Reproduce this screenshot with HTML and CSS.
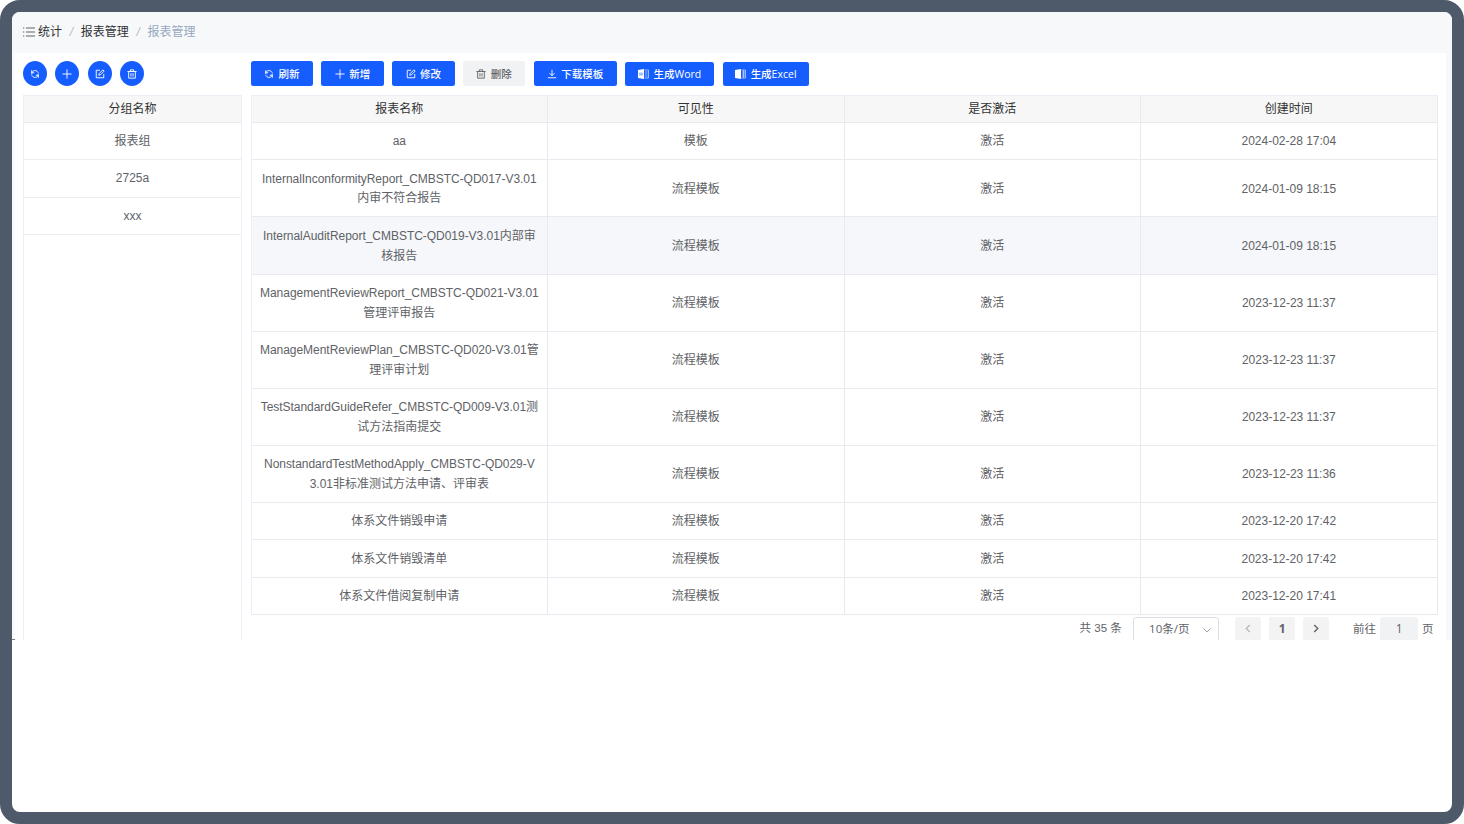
FILE: index.html
```
<!DOCTYPE html>
<html lang="zh-CN">
<head>
<meta charset="utf-8">
<title>报表管理</title>
<link rel="stylesheet" href="styles.css">
</head>
<body>
<svg class="defs" width="0" height="0">
  <symbol id="sync" viewBox="0 0 24 24"><path d="M4 13a8 8 0 0 1 14-6.500l2 2.500M4 3v6h6M20 11a8 8 0 0 1-14 6.500L4 15M20 21v-6h-6"/></symbol>
  <symbol id="plus" viewBox="0 0 24 24"><path d="M12 1v22M1 12h22"/></symbol>
  <symbol id="edit" viewBox="0 0 24 24"><path d="M12 3H3v18h18v-9M9 15l1-4 9-9 3 3-9 9z"/></symbol>
  <symbol id="trash" viewBox="0 0 24 24"><path d="M1 6h22M8 6V2h8v4M4 6v16h16V6M9.500 10v8M14.500 10v8"/></symbol>
  <symbol id="download" viewBox="0 0 24 24"><path d="M12 2v14M6 10l6 6 6-6M2 21h20"/></symbol>
</svg>
<div class="frame">
  <nav class="crumbs">
    <svg class="menu" viewBox="0 0 12 10"><path d="M3 1h9M3 5h9M3 9h9M0 1h1.300M0 5h1.300M0 9h1.300"/></svg>
    <span class="here">统计</span><i>/</i><span class="here">报表管理</span><i>/</i><span>报表管理</span>
  </nav>
  <main class="page">
    <aside class="side">
      <div class="rounds">
        <button><svg><use href="#sync"/></svg></button>
        <button><svg><use href="#plus"/></svg></button>
        <button><svg><use href="#edit"/></svg></button>
        <button><svg><use href="#trash"/></svg></button>
      </div>
      <div class="groups">
        <div class="group-head">分组名称</div>
        <div class="group">报表组</div>
        <div class="group">2725a</div>
        <div class="group">xxx</div>
      </div>
    </aside>
    <section class="main">
      <div class="tools">
        <button class="btn"><svg><use href="#sync"/></svg>刷新</button>
        <button class="btn"><svg><use href="#plus"/></svg>新增</button>
        <button class="btn"><svg><use href="#edit"/></svg>修改</button>
        <button class="btn off"><svg><use href="#trash"/></svg>删除</button>
        <button class="btn load"><svg><use href="#download"/></svg>下载模板</button>
        <button class="btn word"><svg class="doc" viewBox="0 0 11 10"><path class="solid" d="M0 1l6-1v10L0 9z"/><path class="mark" d="M1.200 3.500l.8 3 1-3 1 3 .8-3"/><path class="page-line" d="M6.500 1h4v8h-4M7 3h2.500M7 5h2.500M7 7h2.500"/></svg>生成Word</button>
        <button class="btn excel"><svg class="doc" viewBox="0 0 11 10"><path class="solid" d="M0 1l6-1v10L0 9z"/><path class="page-line" d="M6.500 1h4v8h-4M7 3h3M7 5h3M7 7h3M8.500 1v8"/></svg>生成Excel</button>
      </div>
      <table class="reports">
        <thead><tr><th>报表名称</th><th>可见性</th><th>是否激活</th><th>创建时间</th></tr></thead>
        <tbody>
          <tr><td>aa</td><td>模板</td><td>激活</td><td>2024-02-28 17:04</td></tr>
          <tr class="tall"><td><span class="fit">InternalInconformityReport_CMBSTC-QD017-V3.01</span><br>内审不符合报告</td><td>流程模板</td><td>激活</td><td>2024-01-09 18:15</td></tr>
          <tr class="tall hover"><td><span class="fit">InternalAuditReport_CMBSTC-QD019-V3.01内部审</span><br>核报告</td><td>流程模板</td><td>激活</td><td>2024-01-09 18:15</td></tr>
          <tr class="tall"><td><span class="fit">ManagementReviewReport_CMBSTC-QD021-V3.01</span><br>管理评审报告</td><td>流程模板</td><td>激活</td><td>2023-12-23 11:37</td></tr>
          <tr class="tall"><td><span class="fit">ManageMentReviewPlan_CMBSTC-QD020-V3.01管</span><br>理评审计划</td><td>流程模板</td><td>激活</td><td>2023-12-23 11:37</td></tr>
          <tr class="tall"><td><span class="fit">TestStandardGuideRefer_CMBSTC-QD009-V3.01测</span><br>试方法指南提交</td><td>流程模板</td><td>激活</td><td>2023-12-23 11:37</td></tr>
          <tr class="tall"><td><span class="fit">NonstandardTestMethodApply_CMBSTC-QD029-V</span><br>3.01非标准测试方法申请、评审表</td><td>流程模板</td><td>激活</td><td>2023-12-23 11:36</td></tr>
          <tr><td>体系文件销毁申请</td><td>流程模板</td><td>激活</td><td>2023-12-20 17:42</td></tr>
          <tr><td>体系文件销毁清单</td><td>流程模板</td><td>激活</td><td>2023-12-20 17:42</td></tr>
          <tr><td>体系文件借阅复制申请</td><td>流程模板</td><td>激活</td><td>2023-12-20 17:41</td></tr>
        </tbody>
      </table>
      <div class="pager">
        <span class="total">共 35 条</span>
        <div class="size"><span>10条/页</span><svg viewBox="0 0 8 5"><path d="M.5.5L4 4 7.500.5"/></svg></div>
        <div class="pg prev"><svg viewBox="0 0 6 10"><path d="M5 1L1 5l4 4"/></svg></div>
        <div class="pg">1</div>
        <div class="pg"><svg viewBox="0 0 6 10"><path d="M1 1l4 4-4 4"/></svg></div>
        <span class="go">前往</span><div class="jump">1</div><span class="unit">页</span>
      </div>
    </section>
  </main>
  <span class="tick"></span>
</div>
</body>
</html>
```
FILE: styles.css
```
* { box-sizing: border-box; }
body { margin: 0; background: #fff; font: 12px/19.5px "Liberation Sans", "Noto Sans CJK SC", sans-serif; color: #606266; }
.defs { position: absolute; }
svg { fill: none; stroke: currentColor; display: block; flex: none; }
.frame { position: relative; width: 1464px; height: 824px; border: 12px solid #4e5a6a; border-radius: 20px; overflow: hidden; background: #fff; }
.crumbs { height: 41px; background: #f6f8fa; display: flex; align-items: center; padding-left: 10.5px; color: #97a8be; white-space: nowrap; }
.crumbs .here { color: #303133; }
.crumbs i { width: 18.8px; text-align: center; color: #b4bac5; }
.menu { width: 12px; height: 10px; margin: 0 3.4px 2px 0; color: #5d6570; stroke-width: 1.1; }
.page { height: 587px; display: flex; overflow: hidden; padding: 8px 9px 0 8px; border-left: 3px solid #fafbfe; border-right: 6px solid #f6f8fa; }
.side { width: 219px; margin-right: 8.6px; flex: none; }
.rounds { display: flex; gap: 8.4px; height: 34px; }
.rounds button { width: 24px; height: 25px; border: 0; border-radius: 50%; background: #165dff; color: #fff; padding: 0; display: flex; align-items: center; justify-content: center; }
.rounds svg { width: 10px; height: 10px; stroke-width: 2.2; }
.groups { height: 560px; border: 1px solid #ebeef5; text-align: center; }
.group-head { height: 27px; line-height: 26px; background: #f7f7f7; border-bottom: 1px solid #e8eaf0; color: #333; }
.group { height: 37.4px; line-height: 36.5px; border-bottom: 1px solid #ebedf3; }
.main { width: 1187px; flex: none; }
.tools { height: 34px; display: flex; }
.btn { width: 62.5px; height: 25px; padding: 0; margin-right: 8.25px; border: 0; border-radius: 2.5px; background: #165dff; color: #fff; font: 500 10.5px/24px "Open Sans", "Noto Sans CJK SC", sans-serif; display: flex; align-items: center; justify-content: center; gap: 4.5px; white-space: nowrap; }
.btn svg { width: 10px; height: 10px; stroke-width: 2.2; }
.btn.off { background: #f1f2f3; color: #606266; }
.btn.load { width: 83px; }
.btn.word { width: 89.5px; height: 24px; margin-top: 1px; }
.btn.excel { width: 86.5px; height: 24px; margin-top: 1px; }
.btn .doc { width: 11px; height: 10px; stroke-width: 1; }
.solid { fill: #fff; stroke: none; }
.mark { stroke: #6d9bff; stroke-width: .7; }
.page-line { stroke: #bed1ff; stroke-width: .8; }
.reports { width: 1187px; table-layout: fixed; border-collapse: separate; border-spacing: 0; text-align: center; border-top: 1px solid #ebeef5; border-left: 1px solid #ebeef5; }
.reports th, .reports td { padding: 2px 0 0; border-right: 1px solid #e8eaf0; border-bottom: 1px solid #e8eaf0; white-space: nowrap; font-weight: 400; }
.reports th { height: 27px; background: #f7f7f7; color: #333; }
.reports td { height: 37.4px; }
.reports .tall td { height: 57.1px; }
.reports .hover td { background: #f5f7fa; }
.fit { letter-spacing: -.035px; }
.pager { display: flex; padding-top: 2px; height: 40px; line-height: 23px; white-space: nowrap; }
.total { margin-left: 829px; width: 53.5px; font-size: 11.5px; }
.size { width: 86px; height: 30px; border: 1px solid #dcdfe6; border-radius: 3px; display: flex; padding: 0 7px 0 15px; justify-content: space-between; font: 11.5px/22px "Open Sans", "Noto Sans CJK SC", sans-serif; }
.size svg { width: 8px; height: 5px; margin-top: 10px; color: #9ca0a8; }
.pg { width: 26px; height: 30px; margin-left: 8px; background: #f3f3f4; border-radius: 2px; text-align: center; font-family: "Open Sans", sans-serif; font-weight: 700; }
.pg.prev { margin-left: 16px; color: #b7bac0; }
.pg svg { width: 6px; height: 9px; margin: 7px auto; stroke-width: 1.5; }
.go { margin-left: 24px; width: 27px; font-size: 11.5px; line-height: 24px; }
.jump { width: 38px; height: 30px; background: #f1f2f4; border-radius: 3px; text-align: center; font-family: "Open Sans", sans-serif; }
.unit { margin-left: 4px; font-size: 11.5px; line-height: 24px; }
.tick { position: absolute; left: 0; top: 627px; width: 3px; height: 1px; background: #8b7179; }
```
